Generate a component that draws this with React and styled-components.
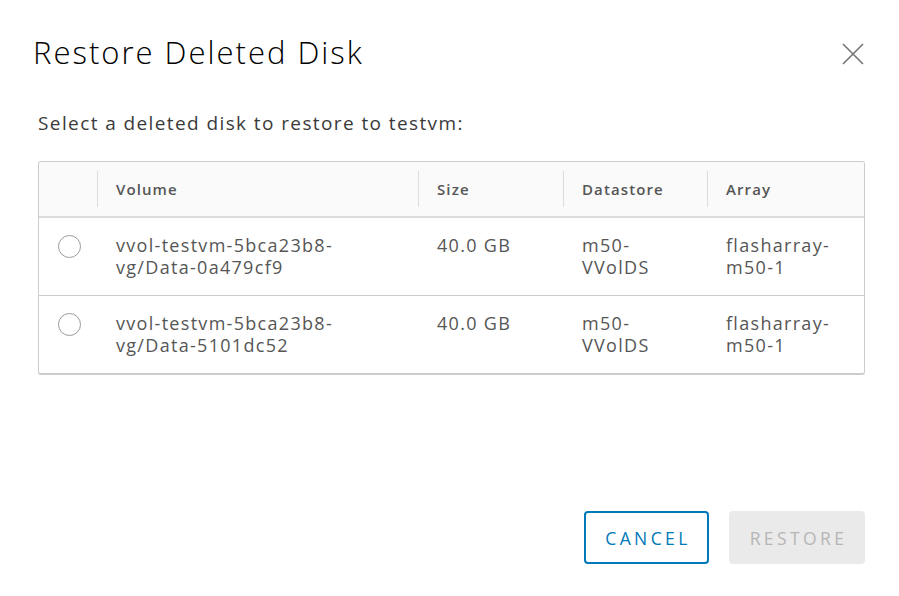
import React, { useState } from "react"
import styled, { createGlobalStyle } from "styled-components"

const GlobalStyle = createGlobalStyle`
  html, body {
    margin: 0;
    padding: 0;
    background: #ffffff;
  }
  body {
    font-family: "Open Sans", "Noto Sans", sans-serif;
    color: #565656;
  }
`

const Dialog = styled.div`
  width: 899px;
  height: 596px;
  box-sizing: border-box;
  display: flex;
  flex-direction: column;
  padding: 33px 34px 32px 0;
`

const Header = styled.div`
  display: flex;
  justify-content: space-between;
  align-items: flex-start;
  padding-left: 33px;
`

const Title = styled.h1`
  margin: 0;
  font-size: 31px;
  line-height: 38px;
  font-weight: 300;
  letter-spacing: 2px;
  color: #000000;
`

const CloseButton = styled.button`
  border: none;
  background: none;
  padding: 0;
  margin: 9px 0 0 0;
  width: 24px;
  height: 24px;
  display: flex;
  align-items: center;
  justify-content: center;
  cursor: pointer;
`

const Body = styled.div`
  flex: 1;
  padding: 38px 0 0 38px;
`

const Lead = styled.p`
  margin: 0 0 24px;
  font-size: 19px;
  line-height: 28px;
  letter-spacing: 1.4px;
  color: #3a3a3a;
`

const Grid = styled.div`
  border: 1px solid #cccccc;
  border-bottom-width: 2px;
  border-radius: 3px;
  overflow: hidden;
`

const cols = "58px 321px 145px 144px 1fr"

const HeadRow = styled.div`
  display: grid;
  grid-template-columns: ${cols};
  height: 54px;
  background: #fafafa;
  border-bottom: 2px solid #dddddd;
  align-items: center;
`

const HeadCell = styled.div`
  height: 36px;
  display: flex;
  align-items: center;
  padding-left: 18px;
  border-left: ${(p) => (p.$first ? "none" : "1px solid #dddddd")};
  font-size: 15px;
  font-weight: 600;
  color: #565656;
  letter-spacing: 1.1px;
`

const Row = styled.label`
  display: grid;
  grid-template-columns: ${cols};
  height: 77px;
  border-top: ${(p) => (p.$first ? "none" : "1px solid #cccccc")};
  cursor: pointer;
`

const Cell = styled.div`
  padding: 16px 0 0 19px;
  font-size: 18px;
  line-height: 22px;
  letter-spacing: 1.3px;
  color: #565656;
`

const RadioCell = styled.div`
  padding: 17px 0 0 19px;
`

const Radio = styled.span`
  display: block;
  width: 21px;
  height: 21px;
  border-radius: 50%;
  border: 1.5px solid #9a9a9a;
  box-sizing: content-box;
  background: #ffffff;
  box-shadow: ${(p) => (p.$checked ? "inset 0 0 0 6px #0079b8" : "none")};
`

const Footer = styled.div`
  display: flex;
  justify-content: flex-end;
  gap: 20px;
`

const Button = styled.button`
  width: ${(p) => p.$width}px;
  height: 53px;
  box-sizing: border-box;
  padding: 0 0 0 3px;
  border-radius: 4px;
  font-family: "Open Sans", "Noto Sans", sans-serif;
  font-size: 17.5px;
  font-weight: 500;
  letter-spacing: 3.4px;
  text-transform: uppercase;
  border: 2px solid ${(p) => (p.$primary ? "#eaeaea" : "#0079b8")};
  background: ${(p) => (p.$primary ? "#eaeaea" : "#ffffff")};
  color: ${(p) => (p.$primary ? "#b6b6b6" : "#0079b8")};
  cursor: ${(p) => (p.disabled ? "not-allowed" : "pointer")};
`

const disks = [
  { id: "a", volume: ["vvol-testvm-5bca23b8-", "vg/Data-0a479cf9"], size: "40.0 GB", store: ["m50-", "VVolDS"], array: ["flasharray-", "m50-1"] },
  { id: "b", volume: ["vvol-testvm-5bca23b8-", "vg/Data-5101dc52"], size: "40.0 GB", store: ["m50-", "VVolDS"], array: ["flasharray-", "m50-1"] },
]

const Lines = ({ parts }) => (
  <>
    {parts.map((p, i) => (
      <div key={i}>{p}</div>
    ))}
  </>
)

const App = () => {
  const [selected, setSelected] = useState(null)

  return (
    <Dialog>
      <GlobalStyle />
      <Header>
        <Title>Restore Deleted Disk</Title>
        <CloseButton aria-label="Close">
          <svg width="22" height="22" viewBox="0 0 22 22">
            <path d="M1 1 L21 21 M21 1 L1 21" stroke="#747474" strokeWidth="1.6" fill="none" />
          </svg>
        </CloseButton>
      </Header>

      <Body>
        <Lead>Select a deleted disk to restore to testvm:</Lead>
        <Grid>
          <HeadRow>
            <HeadCell $first />
            <HeadCell>Volume</HeadCell>
            <HeadCell>Size</HeadCell>
            <HeadCell>Datastore</HeadCell>
            <HeadCell>Array</HeadCell>
          </HeadRow>
          {disks.map((d, i) => (
            <Row key={d.id} $first={i === 0} onClick={() => setSelected(d.id)}>
              <RadioCell>
                <Radio $checked={selected === d.id} />
              </RadioCell>
              <Cell>
                <Lines parts={d.volume} />
              </Cell>
              <Cell>{d.size}</Cell>
              <Cell>
                <Lines parts={d.store} />
              </Cell>
              <Cell>
                <Lines parts={d.array} />
              </Cell>
            </Row>
          ))}
        </Grid>
      </Body>

      <Footer>
        <Button $width={125}>Cancel</Button>
        <Button $width={136} $primary disabled={!selected}>Restore</Button>
      </Footer>
    </Dialog>
  )
}

export default App
